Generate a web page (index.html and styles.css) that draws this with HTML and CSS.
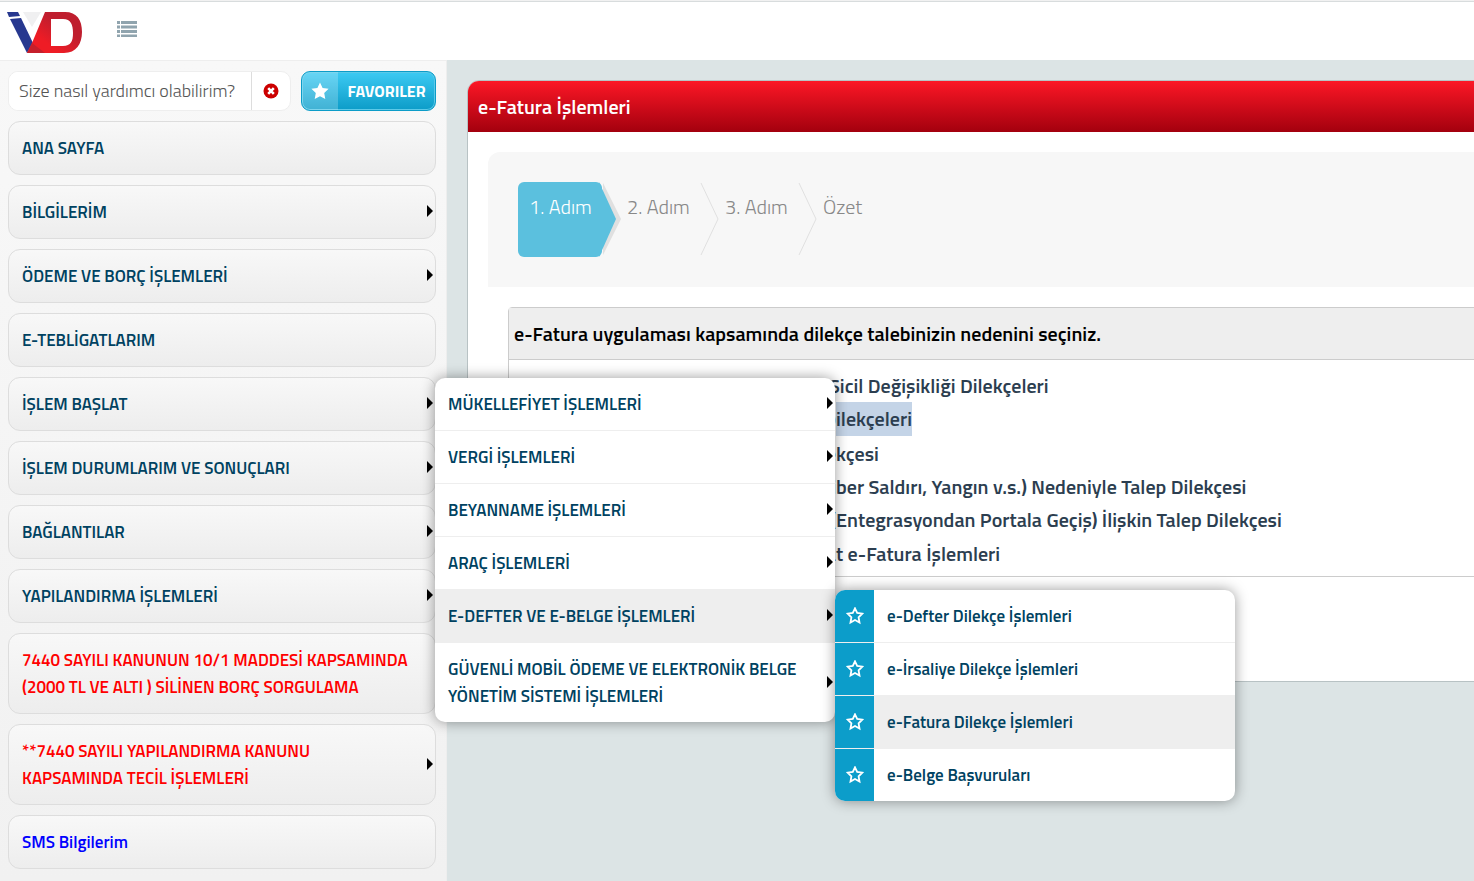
FILE: index.html
```html
<!DOCTYPE html>
<html lang="tr">
<head>
    <meta charset="UTF-8">
    <meta name="viewport" content="width=device-width, initial-scale=1.0">
    <title>e-Fatura İşlemleri</title>
    <link rel="stylesheet" href="styles.css">
</head>
<body>

    <svg class="sprite" aria-hidden="true">
        <symbol id="star-o" viewBox="0 0 18 18">
            <path d="M9 1.3l2.200 4.700 5.100.7-3.700 3.600.9 5.200L9 13 4.500 15.500l.9-5.200L1.700 6.700l5.100-.7z" fill="none" stroke="#fff" stroke-width="1.800"/>
        </symbol>
    </svg>

    <header class="topbar">
        <a href="#" class="logo" aria-label="İnteraktif Vergi Dairesi">
            <svg width="76" height="42" viewBox="0 0 76 42">
                <defs>
                    <linearGradient id="red" x1="0" y1="1" x2="1" y2="0">
                        <stop offset="0.3" stop-color="#ee1c25"/>
                        <stop offset="0.65" stop-color="#bf1e2e"/>
                    </linearGradient>
                </defs>
                <path d="M16 0h18l-9 15z" fill="#f0f0f1"/>
                <path d="M0 0h11l2 4-11 1z" fill="#27388f"/>
                <path d="M3 7l11-1 12 25-6 10z" fill="#27388f"/>
                <path fill-rule="evenodd" d="M38 0h20c12 0 17 8 17 20s-6 21-18 21H20l5-10zM44 7v27h12c8 0 10-5 10-13S64 7 56 7z" fill="url(#red)"/>
                <path d="M25 31l13 10H20z" fill="#c51f2b"/>
            </svg>
        </a>
        <button class="toggle" aria-label="Menü">
            <svg width="20" height="16" viewBox="0 0 20 16" fill="#90a4ae">
                <path d="M0 0h3v3H0zM4 0h16v3H4zM0 4.500h3v3H0zM4 4.500h16v3H4zM0 9h3v3H0zM4 9h16v3H4zM0 13.500h3v2.500H0zM4 13.500h16v2.500H4z"/>
            </svg>
        </button>
    </header>

    <div class="page">
        <aside class="sidebar">
            <div class="tools">
                <div class="search">
                    <input type="text" placeholder="Size nasıl yardımcı olabilirim?" aria-label="Arama">
                    <button class="clear" aria-label="Temizle">
                        <svg width="16" height="16" viewBox="0 0 16 16">
                            <circle cx="8" cy="8" r="7.500" fill="#c00"/>
                            <path d="M5.200 5.200l5.600 5.600M10.800 5.200l-5.600 5.600" stroke="#fff" stroke-width="2.600"/>
                        </svg>
                    </button>
                </div>
                <button class="fav">
                    <span class="fav-icon">
                        <svg width="18" height="18" viewBox="0 0 18 18"><path d="M9 .5l2.600 5.600 6 .7-4.400 4.200 1.100 6L9 14.200 3.700 17l1.100-6L.4 6.800l6-.7z" fill="#fff"/></svg>
                    </span>
                    <span class="fav-text">FAVORILER</span>
                </button>
            </div>

            <ul class="menu">
                <li><a href="#">ANA SAYFA</a></li>
                <li class="has-sub"><a href="#">BİLGİLERİM</a></li>
                <li class="has-sub"><a href="#">ÖDEME VE BORÇ İŞLEMLERİ</a></li>
                <li><a href="#">E-TEBLİGATLARIM</a></li>
                <li class="has-sub">
                    <a href="#">İŞLEM BAŞLAT</a>
                    <ul class="submenu">
                        <li class="has-sub"><a href="#">MÜKELLEFİYET İŞLEMLERİ</a></li>
                        <li class="has-sub"><a href="#">VERGİ İŞLEMLERİ</a></li>
                        <li class="has-sub"><a href="#">BEYANNAME İŞLEMLERİ</a></li>
                        <li class="has-sub"><a href="#">ARAÇ İŞLEMLERİ</a></li>
                        <li class="has-sub active">
                            <a href="#">E-DEFTER VE E-BELGE İŞLEMLERİ</a>
                            <ul class="submenu starred">
                                <li><button class="star" aria-label="Favorilere ekle"><svg width="18" height="18"><use href="#star-o"/></svg></button><a href="#">e-Defter Dilekçe İşlemleri</a></li>
                                <li><button class="star" aria-label="Favorilere ekle"><svg width="18" height="18"><use href="#star-o"/></svg></button><a href="#">e-İrsaliye Dilekçe İşlemleri</a></li>
                                <li class="active"><button class="star" aria-label="Favorilere ekle"><svg width="18" height="18"><use href="#star-o"/></svg></button><a href="#">e-Fatura Dilekçe İşlemleri</a></li>
                                <li><button class="star" aria-label="Favorilere ekle"><svg width="18" height="18"><use href="#star-o"/></svg></button><a href="#">e-Belge Başvuruları</a></li>
                            </ul>
                        </li>
                        <li class="has-sub"><a href="#">GÜVENLİ MOBİL ÖDEME VE ELEKTRONİK BELGE YÖNETİM SİSTEMİ İŞLEMLERİ</a></li>
                    </ul>
                </li>
                <li class="has-sub"><a href="#">İŞLEM DURUMLARIM VE SONUÇLARI</a></li>
                <li class="has-sub"><a href="#">BAĞLANTILAR</a></li>
                <li class="has-sub"><a href="#">YAPILANDIRMA İŞLEMLERİ</a></li>
                <li class="red"><a href="#">7440 SAYILI KANUNUN 10/1 MADDESİ KAPSAMINDA (2000 TL VE ALTI ) SİLİNEN BORÇ SORGULAMA</a></li>
                <li class="has-sub red"><a href="#">**7440 SAYILI YAPILANDIRMA KANUNU<br>KAPSAMINDA TECİL İŞLEMLERİ</a></li>
                <li class="blue"><a href="#">SMS Bilgilerim</a></li>
            </ul>
        </aside>

        <main class="content">
            <section class="panel">
                <h1>e-Fatura İşlemleri</h1>
                <div class="panel-body">
                    <ol class="steps">
                        <li class="current">1. Adım
                            <svg class="arrow" width="22" height="75" viewBox="0 0 22 75"><path d="M4 1l18 36L4 73z" fill="#e0e0e0"/><path d="M0 0l17 37L0 75z" fill="#5bc0de"/></svg>
                        </li>
                        <li>2. Adım
                            <svg class="arrow" width="22" height="75" viewBox="0 0 22 75"><path d="M4 1l17 36L4 73" fill="none" stroke="#e0e0e0"/></svg>
                        </li>
                        <li>3. Adım
                            <svg class="arrow" width="22" height="75" viewBox="0 0 22 75"><path d="M4 1l17 36L4 73" fill="none" stroke="#e0e0e0"/></svg>
                        </li>
                        <li>Özet</li>
                    </ol>

                    <div class="question">
                        <h2>e-Fatura uygulaması kapsamında dilekçe talebinizin nedenini seçiniz.</h2>
                        <div class="options">
                            <label><input type="radio" name="neden"><span class="lead"></span>Sicil Değişikliği Dilekçeleri</label>
                            <label><input type="radio" name="neden"><span class="lead">D</span><mark>ilekçeleri</mark></label>
                            <label><input type="radio" name="neden"><span class="lead">Dile</span>kçesi</label>
                            <label><input type="radio" name="neden"><span class="lead">(Si</span>ber Saldırı, Yangın v.s.) Nedeniyle Talep Dilekçesi</label>
                            <label><input type="radio" name="neden"><span class="lead">(</span>Entegrasyondan Portala Geçiş) İlişkin Talep Dilekçesi</label>
                            <label><input type="radio" name="neden"><span class="lead">a</span>t e-Fatura İşlemleri</label>
                        </div>
                    </div>
                </div>
            </section>
        </main>
    </div>

</body>
</html>
```
FILE: styles.css
```css
* {
    box-sizing: border-box;
}

body {
    margin: 0;
    min-height: 100vh;
    display: flex;
    flex-direction: column;
    font-family: 'Titillium Web', Roboto, sans-serif;
    font-size: 17px;
    background-color: #f1f1f1;
    overflow: hidden;
}

ul, ol {
    list-style: none;
    margin: 0;
    padding: 0;
}

a {
    color: inherit;
    text-decoration: none;
}

button {
    font-family: inherit;
    border: none;
    padding: 0;
    cursor: pointer;
}

.sprite {
    display: none;
}

/* Header */
.topbar {
    display: flex;
    align-items: flex-start;
    gap: 34px;
    height: 59px;
    margin-top: 1px;
    padding: 10px 7px;
    background-color: #fff;
    border-top: 1px solid #d8dcdd;
}

.logo svg,
.toggle svg {
    display: block;
}

.toggle {
    margin-top: 9px;
    background: none;
}

.page {
    display: flex;
    flex: 1;
}

/* Sidebar */
.sidebar {
    position: relative;
    z-index: 1;
    flex: 0 0 447px;
    padding: 10px 10px 12px 8px;
    background: linear-gradient(#f8f8f8, #f1f1f1);
    border-top: 1px solid #eee;
    border-right: 1px solid #eee;
}

.tools {
    display: flex;
    gap: 10px;
    height: 40px;
    margin-bottom: 10px;
}

.search {
    display: flex;
    flex: 1;
    min-width: 0;
    background-color: #fff;
    border: 1px solid #eee;
    border-radius: 10px;
    overflow: hidden;
}

.search input {
    flex: 1;
    min-width: 0;
    padding: 0 10px 2px;
    border: none;
    border-right: 1px solid #ddd;
    font-family: inherit;
    font-size: 18px;
    font-weight: 300;
    color: #555;
}

.search input::placeholder {
    color: #555;
}

.clear {
    width: 38px;
    background: none;
}

.clear svg {
    display: block;
    margin: auto;
}

.fav {
    display: flex;
    width: 135px;
    border: 1px solid #0c9cc8;
    border-radius: 9px;
    background: linear-gradient(#3dcaf3, #0c9cc8);
    box-shadow: inset 0 0 0 1px #5cc9e8;
    color: #fff;
    overflow: hidden;
}

.fav-icon {
    display: flex;
    align-items: center;
    justify-content: center;
    align-self: stretch;
    width: 36px;
    background-color: rgba(255, 255, 255, 0.22);
}

.fav-text {
    flex: 1;
    font-size: 16px;
    font-weight: 700;
    line-height: 38px;
}

/* Menu */
.menu {
    display: flex;
    flex-direction: column;
    gap: 10px;
    font-size: 17px;
    font-weight: 600;
    line-height: 27px;
    color: #004261;
}

.menu > li {
    position: relative;
    background: linear-gradient(#f8f8f8, #ededed);
    border: 1px solid #ddd;
    border-radius: 12px;
}

.menu a {
    display: block;
    padding: 13px 13px 12px;
}

.has-sub::after {
    content: "";
    position: absolute;
    right: 2px;
    top: 50%;
    margin-top: -7px;
    border: 6px solid transparent;
    border-left-color: #000;
    border-right: none;
}

.menu .red {
    color: #f00;
}

.menu .blue {
    color: #00f;
}

.submenu {
    position: absolute;
    left: 100%;
    top: 0;
    z-index: 2;
    width: 400px;
    background-color: #fff;
    border-radius: 10px;
    box-shadow: 0 0 14px rgba(0, 0, 0, 0.4);
}

.submenu li {
    position: relative;
    border-bottom: 1px solid #eee;
}

.submenu li:last-child {
    border-bottom: none;
}

.submenu .active {
    background-color: #eee;
}

.starred li {
    display: flex;
}

.starred li:first-child .star {
    border-top-left-radius: 10px;
}

.starred li:last-child .star {
    border-bottom-left-radius: 10px;
}

.star {
    display: flex;
    align-items: center;
    justify-content: center;
    width: 39px;
    background-color: #0c9dca;
}

/* Content */
.content {
    flex: 1;
    min-width: 0;
    padding: 20px 0 0 20px;
    background-color: #dce4e5;
    overflow: hidden;
}

.panel {
    margin-right: -40px;
    background-color: #fff;
    border: 1px solid #b8c2c4;
    border-radius: 12px 12px 0 0;
    overflow: hidden;
}

.panel h1 {
    margin: 0;
    padding: 0 10px;
    font-size: 20px;
    font-weight: 600;
    line-height: 51px;
    color: #fff;
    background: linear-gradient(#fc1726, #a3000e);
}

.panel-body {
    padding: 20px 0 104px 20px;
}

.steps {
    display: flex;
    padding: 30px;
    background-color: #f7f7f7;
    border-radius: 12px 12px 0 0;
    font-size: 20px;
    font-weight: 300;
    color: #888;
}

.steps li {
    position: relative;
    width: 98px;
    height: 75px;
    padding-left: 11px;
    line-height: 50px;
}

.steps .current {
    z-index: 1;
    color: #fff;
}

.steps .current::before {
    content: "";
    position: absolute;
    left: 0;
    top: 0;
    z-index: -1;
    width: 84px;
    height: 75px;
    border-radius: 6px;
    background-color: #5bc0de;
}

.arrow {
    position: absolute;
    left: 81px;
    top: 0;
}

.question {
    margin: 20px 0 0 20px;
    border: 1px solid #ccc;
    border-radius: 4px 4px 0 0;
}

.question h2 {
    margin: 0;
    padding: 0 5px;
    font-size: 20px;
    font-weight: 600;
    line-height: 51px;
    color: #000;
    background-color: #eee;
    border-bottom: 1px solid #ccc;
}

.options {
    display: grid;
    grid-auto-rows: 1fr;
    height: 216px;
    padding: 9px 0 6px;
    font-size: 20px;
    font-weight: 600;
    color: #2c3e50;
}

.options label {
    display: flex;
    align-items: center;
}

.options input {
    width: 14px;
    height: 14px;
    margin: 0 0 0 10px;
}

.lead {
    width: 303px;
    text-align: right;
}

/* nothing before the text, so the column ends earlier */
.lead:empty {
    width: 296px;
}

.options mark {
    color: inherit;
    line-height: 34px;
    background-color: #c4d4e7;
}
```
